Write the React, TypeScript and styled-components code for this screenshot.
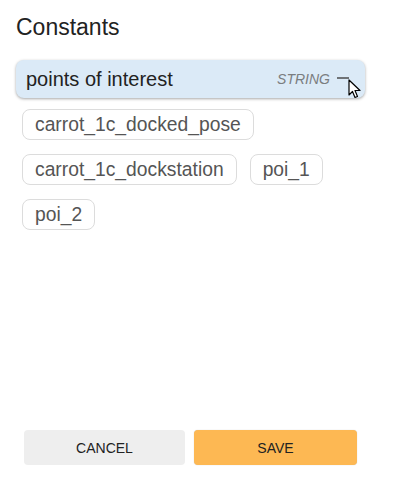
import styled, { createGlobalStyle } from "styled-components";

const GlobalStyle = createGlobalStyle`
  body {
    margin: 0;
    font-family: "Liberation Sans", Arial, sans-serif;
    background: #fff;
  }
`;

const Page = styled.div`
  display: flex;
  flex-direction: column;
  width: 365px;
  height: 495px;
  box-sizing: border-box;
  padding: 14px 0 30px 16px;
`;

const Title = styled.h2`
  margin: 0 0 20px;
  font-size: 23px;
  line-height: 26px;
  font-weight: 400;
  color: #222;
`;

const Field = styled.div`
  position: relative;
  display: flex;
  align-items: center;
  height: 38px;
  padding: 0 16px 0 10px;
  border-radius: 8px;
  background: #dbeaf7;
  box-shadow: 0 1px 3px rgba(0, 0, 0, 0.35);
`;

const FieldText = styled.span`
  flex: 1;
  font-size: 20px;
  color: #222;
`;

const TypeLabel = styled.span`
  font-size: 14px;
  font-style: italic;
  color: #7a7d80;
  margin-right: 7px;
`;

const Dash = styled.span`
  width: 12px;
  height: 2px;
  background: #6f7377;
  margin-bottom: 2px;
`;

const Cursor = styled.svg`
  position: absolute;
  left: 332px;
  top: 19px;
`;

const Chips = styled.div`
  display: flex;
  flex-wrap: wrap;
  gap: 14px 13px;
  padding: 11px 6px 0;
`;

const Chip = styled.span`
  display: inline-flex;
  align-items: center;
  height: 31px;
  box-sizing: border-box;
  padding: 0 12px;
  border: 1px solid #dcdcdc;
  border-radius: 8px;
  font-size: 19.3px;
  color: #555;
`;

const Actions = styled.div`
  display: flex;
  gap: 9px;
  margin-top: auto;
  padding-left: 8px;
`;

const Button = styled.button<{ $primary?: boolean }>`
  width: ${(p) => (p.$primary ? "163px" : "161px")};
  height: 35px;
  border: none;
  border-radius: 4px;
  font-family: inherit;
  font-size: 14px;
  color: #222;
  text-transform: uppercase;
  background: ${(p) => (p.$primary ? "#fdb853" : "#eeeeee")};
  box-shadow: ${(p) => (p.$primary ? "0 0 1px rgba(0,0,0,0.25)" : "none")};
`;

const constants = [
  "carrot_1c_docked_pose",
  "carrot_1c_dockstation",
  "poi_1",
  "poi_2",
];

export default function App() {
  return (
    <>
      <GlobalStyle />
      <Page>
        <Title>Constants</Title>
        <Field>
          <FieldText>points of interest</FieldText>
          <TypeLabel>STRING</TypeLabel>
          <Dash />
          <Cursor width="14" height="21" viewBox="0 0 14 21">
            <path
              d="M1 1 L1 16 L4.5 12.5 L7 18.5 L9.5 17.5 L7 11.5 L12 11.5 Z"
              fill="#fff"
              stroke="#000"
              strokeWidth="1.2"
              strokeLinejoin="round"
            />
          </Cursor>
        </Field>
        <Chips>
          {constants.map((c) => (
            <Chip key={c}>{c}</Chip>
          ))}
        </Chips>
        <Actions>
          <Button>Cancel</Button>
          <Button $primary>Save</Button>
        </Actions>
      </Page>
    </>
  );
}
